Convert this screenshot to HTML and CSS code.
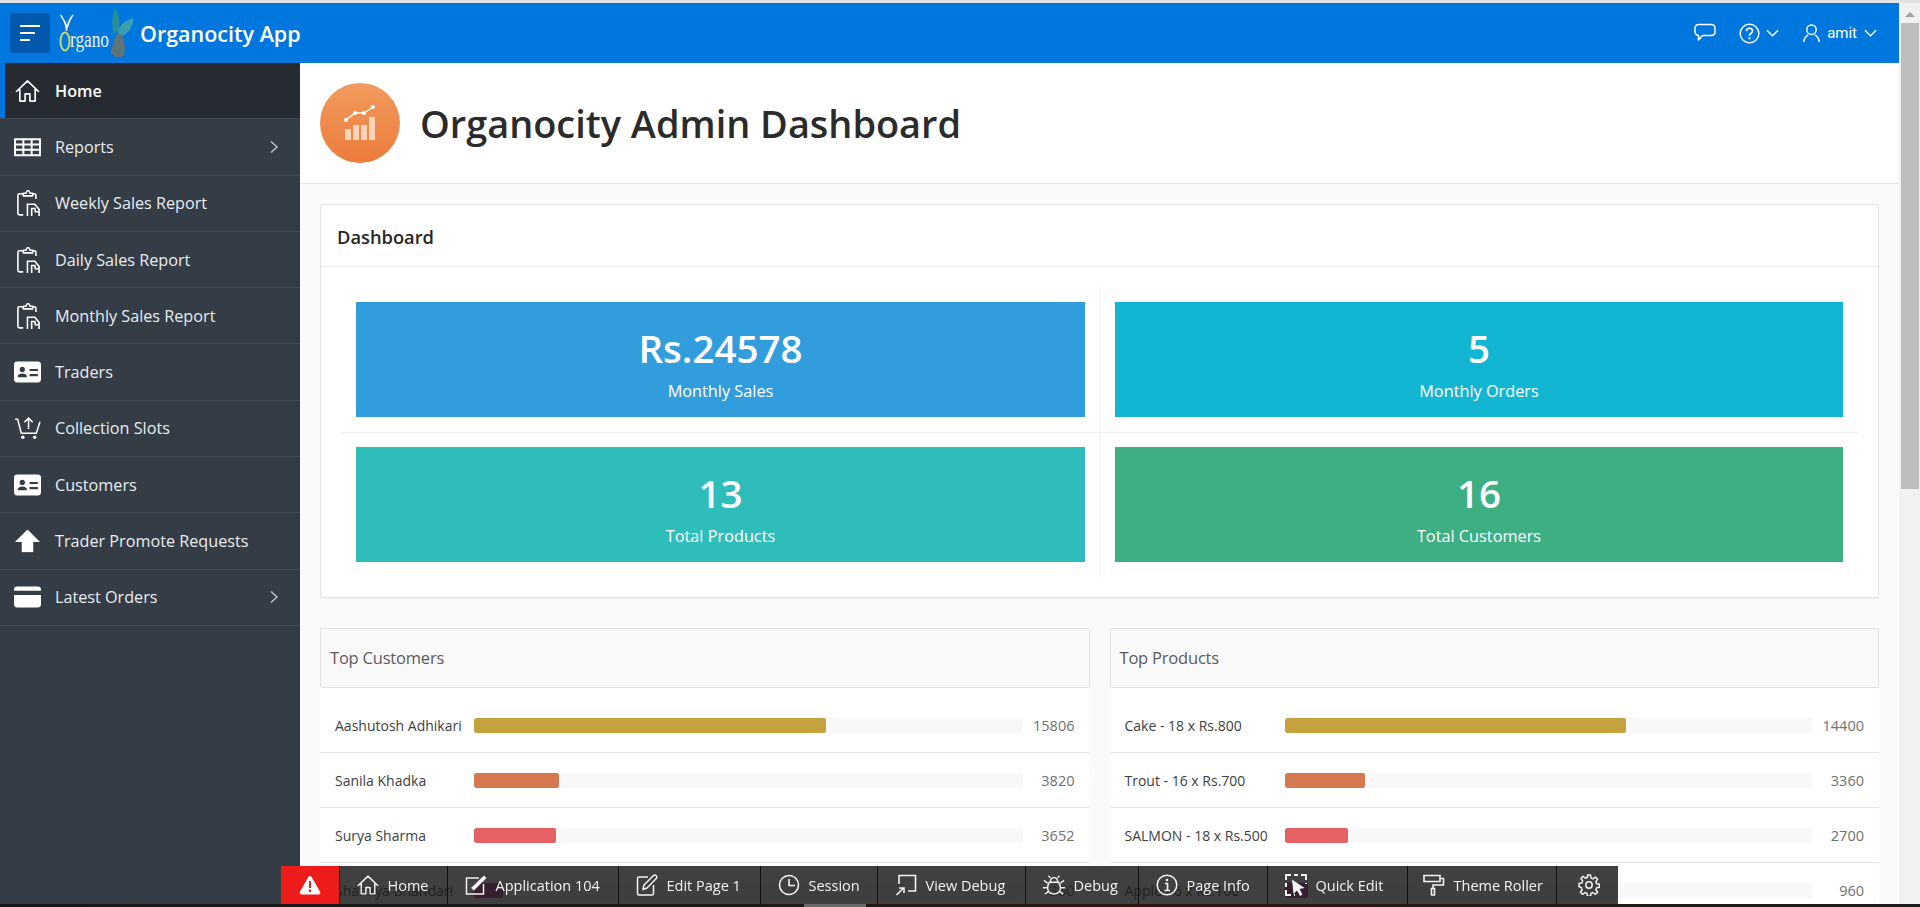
FILE: index.html
```html
<!DOCTYPE html>
<html lang="en">
<head>
  <meta charset="UTF-8">
  <title>Organocity App</title>
  <link rel="stylesheet" href="styles.css">
</head>
<body>

  <svg class="sprite" xmlns="http://www.w3.org/2000/svg">
    <symbol id="i-home" viewBox="0 0 26 24"><path d="M1.500 12.500 13 1.500l11.500 11M5 10v12.500h5.500V15h5v7.500H21V10" fill="none" stroke="currentColor" stroke-width="1.700" stroke-linejoin="round" stroke-linecap="round"/></symbol>
    <symbol id="i-table" viewBox="0 0 26 18"><path d="M1 1.500h24v15.500H1zM1 6.500h24M1 11.700h24M9 1.500V17M17 1.500V17" fill="none" stroke="currentColor" stroke-width="1.900"/></symbol>
    <symbol id="i-clip" viewBox="2 0 22 25.500"><path d="M8 4H4.500Q3 4 3 5.500v17Q3 24 4.500 24H8M17 4h1.500Q20 4 20 5.500V9M8 6V3.500h2.500Q11.500 1 12.500 1t2 2.500H17V6z" fill="none" stroke="currentColor" stroke-width="1.500" stroke-linejoin="round"/><path d="M12 25V14h7l4 5v6M16 25v-7h3l.5 3H23" fill="none" stroke="currentColor" stroke-width="1.500"/></symbol>
    <symbol id="i-id" viewBox="0 0 26 20"><rect width="26" height="20" rx="3" fill="currentColor"/><circle cx="8" cy="7.500" r="2.500" fill="#343d46"/><path d="M3.500 15q0-3.500 4.500-3.500t4.500 3.500zM15 7h8v2h-8zM15 12h8v2h-8z" fill="#343d46"/></symbol>
    <symbol id="i-cart" viewBox="0 0 26 22"><path d="M1 2.500h2.500L7 16h14.500L25 5M14 12V2M10 5.500l4-4 4 4" fill="none" stroke="currentColor" stroke-width="1.500"/><circle cx="8.500" cy="20" r="1.700" fill="currentColor"/><circle cx="20" cy="20" r="1.700" fill="currentColor"/></symbol>
    <symbol id="i-up" viewBox="0 0 24 22"><path d="M12 0 24 12h-6.500v10h-11V12H0z" fill="currentColor"/></symbol>
    <symbol id="i-card" viewBox="0 0 26 20"><rect width="26" height="20" rx="3" fill="currentColor"/><path d="M0 4h26v4H0z" fill="#343d46"/></symbol>
    <symbol id="i-chev" viewBox="0 0 10 14"><path d="m2 1.500 6 5.500-6 5.500" fill="none" stroke="currentColor" stroke-width="1.600"/></symbol>
    <symbol id="i-down" viewBox="0 0 14 8"><path d="m1 1 6 6 6-6" fill="none" stroke="currentColor" stroke-width="1.500"/></symbol>
    <symbol id="i-chat" viewBox="0 0 22 20"><path d="M5 1.500h12q4 0 4 4v3q0 4-4 4H8.500L4.500 17v-4.600Q1 12 1 8.500v-3q0-4 4-4z" fill="none" stroke="currentColor" stroke-width="1.500" stroke-linejoin="round"/></symbol>
    <symbol id="i-help" viewBox="0 0 22 22"><circle cx="11" cy="11" r="9.800" fill="none" stroke="currentColor" stroke-width="1.500"/><path d="M7.800 8.500Q8 5.500 11 5.500t3.200 2.700q0 1.600-1.600 2.500-1.600.9-1.600 2.600" fill="none" stroke="currentColor" stroke-width="1.700"/><circle cx="11" cy="16" r="1.200" fill="currentColor"/></symbol>
    <symbol id="i-user" viewBox="0 0 18 20"><circle cx="9" cy="6.500" r="5" fill="none" stroke="currentColor" stroke-width="1.500"/><path d="M1 19.500q0-5 4.500-7.500M17 19.500q0-5-4.500-7.500" fill="none" stroke="currentColor" stroke-width="1.500"/></symbol>
    <symbol id="i-warn" viewBox="0 0 22 20"><path d="M11 1q1 0 1.600 1l8.600 15q.7 2-1.400 2.500H2.200Q.1 19 .8 17L9.400 2Q10 1 11 1z" fill="currentColor"/><path d="M10 6h2v7h-2zM10 14.500h2v2.500h-2z" fill="#ee1b1b"/></symbol>
    <symbol id="i-app" viewBox="0 0 22 20"><path d="M14 3H1.500v16h17V9" fill="none" stroke="currentColor" stroke-width="1.500"/><path d="M6 13 19 .5l2.500 2.500L9 15.500z" fill="currentColor"/></symbol>
    <symbol id="i-edit" viewBox="0 0 22 22"><path d="M12 3H3Q1.500 3 1.500 4.500v15Q1.500 21 3 21h13q1.500 0 1.500-1.500V11" fill="none" stroke="currentColor" stroke-width="1.500"/><path d="M7 15.500 8 11 17.500 1.500q1.300-1 2.500 0t.5 2.700L11 14z" fill="none" stroke="currentColor" stroke-width="1.500" stroke-linejoin="round"/></symbol>
    <symbol id="i-clock" viewBox="0 0 22 22"><circle cx="11" cy="11" r="9.500" fill="none" stroke="currentColor" stroke-width="1.600"/><path d="M11 5v6.500h6" fill="none" stroke="currentColor" stroke-width="1.600"/></symbol>
    <symbol id="i-view" viewBox="0 0 22 22"><path d="M4 10V1.500h16.500V17H13" fill="none" stroke="currentColor" stroke-width="1.600"/><path d="M1.500 21l7-7M4 14h5v5" fill="none" stroke="currentColor" stroke-width="1.600"/></symbol>
    <symbol id="i-bug" viewBox="0 0 24 22"><path d="M7 8h10q2 3 2 6 0 6-7 7-7-1-7-7 0-3 2-6zM8 8q0-5 4-5t4 5" fill="none" stroke="currentColor" stroke-width="1.500"/><path d="M8 3 6 1M16 3l2-2M5 9 1 6M19 9l4-3M5 14H0M19 14h5M6 18l-4 3M18 18l4 3" fill="none" stroke="currentColor" stroke-width="1.500"/></symbol>
    <symbol id="i-info" viewBox="0 0 22 22"><circle cx="11" cy="11" r="9.800" fill="none" stroke="currentColor" stroke-width="1.500"/><path d="M9 9.500h2.500V16M8.500 16.500h5.500" fill="none" stroke="currentColor" stroke-width="1.700"/><circle cx="11" cy="6" r="1.300" fill="currentColor"/></symbol>
    <symbol id="i-quick" viewBox="0 0 22 22"><path d="M1 6V1h5M9 1h4M16 1h5v5M1 9v4M1 16v5h5M9 21h1M21 9v1" fill="none" stroke="currentColor" stroke-width="2"/><path d="M7 5.500 19.500 14l-5 1 3 5.500-2.500 1.500-3-5.500-3.500 3.500z" fill="currentColor"/></symbol>
    <symbol id="i-roller" viewBox="0 0 22 22"><path d="M1 1.500h16v6H1zM17 4.500h3.500V11H10v3.500" fill="none" stroke="currentColor" stroke-width="1.600"/><path d="M8.500 14.500h3V21h-3z" fill="none" stroke="currentColor" stroke-width="1.600"/></symbol>
    <symbol id="i-gear" viewBox="0 0 22 22"><path d="M9.500 1h3l.5 3 2 .9 2.500-1.800 2.100 2.100-1.800 2.500.9 2 2.800.5v3l-2.800.5-.9 2 1.800 2.500-2.100 2.100-2.500-1.800-2 .9-.5 2.800h-3l-.5-2.800-2-.9-2.500 1.800-2.100-2.100 1.800-2.500-.9-2L1 12.500v-3l2.800-.5.9-2-1.800-2.500 2.100-2.100 2.500 1.800 2-.9z" fill="none" stroke="currentColor" stroke-width="1.500" stroke-linejoin="round"/><circle cx="11" cy="11" r="3.200" fill="none" stroke="currentColor" stroke-width="1.500"/></symbol>
  </svg>

  <div class="top-strip"></div>

  <div class="app">
    <div class="shell">

      <header class="topbar">
        <button class="nav-toggle" aria-label="Menu">
          <span class="bar-long"></span>
          <span class="bar-mid"></span>
          <span class="bar-short"></span>
        </button>
        <svg class="logo" viewBox="0 0 76 52">
          <path d="M55 28q-4-14 1-27 6 9 4 21z" fill="#2a8f93"/>
          <path d="M59 26q1-11 16-15-2 14-13 19z" fill="#3a9fb0"/>
          <path d="M52 46l2-10 3-8 4-2 3 5 2 9-1 9-3 1h-6z" fill="#5f7479"/>
          <path d="M7.500 24Q7 15 1.500 8 6 14 8 20M7.500 24Q8 15 14 8 10 14 8.500 20" fill="#f4f4f4" stroke="#f4f4f4" stroke-width="1.300"/>
          <ellipse cx="6" cy="34.500" rx="4.500" ry="9" fill="none" stroke="#c4d86a" stroke-width="2"/>
          <text class="logo-text" x="11" y="40" textLength="39" lengthAdjust="spacingAndGlyphs">rgano</text>
        </svg>
        <a class="brand">Organocity App</a>
        <div class="topbar-actions">
          <svg class="ico-chat"><use href="#i-chat"/></svg>
          <span class="action action-help">
            <svg class="ico-help"><use href="#i-help"/></svg>
            <svg class="ico-down"><use href="#i-down"/></svg>
          </span>
          <span class="action action-user">
            <svg class="ico-user"><use href="#i-user"/></svg>
            <span class="user-name">amit</span>
            <svg class="ico-down"><use href="#i-down"/></svg>
          </span>
        </div>
      </header>

      <div class="workspace">
        <nav class="sidebar">
          <a class="nav-item is-current"><svg class="nav-ico"><use href="#i-home"/></svg><span>Home</span></a>
          <a class="nav-item"><svg class="nav-ico"><use href="#i-table"/></svg><span>Reports</span><svg class="nav-chev"><use href="#i-chev"/></svg></a>
          <a class="nav-item"><svg class="nav-ico nav-ico-clip"><use href="#i-clip"/></svg><span>Weekly Sales Report</span></a>
          <a class="nav-item"><svg class="nav-ico nav-ico-clip"><use href="#i-clip"/></svg><span>Daily Sales Report</span></a>
          <a class="nav-item"><svg class="nav-ico nav-ico-clip"><use href="#i-clip"/></svg><span>Monthly Sales Report</span></a>
          <a class="nav-item"><svg class="nav-ico"><use href="#i-id"/></svg><span>Traders</span></a>
          <a class="nav-item"><svg class="nav-ico"><use href="#i-cart"/></svg><span>Collection Slots</span></a>
          <a class="nav-item"><svg class="nav-ico"><use href="#i-id"/></svg><span>Customers</span></a>
          <a class="nav-item"><svg class="nav-ico"><use href="#i-up"/></svg><span>Trader Promote Requests</span></a>
          <a class="nav-item"><svg class="nav-ico"><use href="#i-card"/></svg><span>Latest Orders</span><svg class="nav-chev"><use href="#i-chev"/></svg></a>
        </nav>

        <main class="content">
          <div class="page-head">
            <div class="page-badge">
              <svg viewBox="0 0 34 36" class="page-badge-ico">
                <path d="M2 24h6v11H2zM10 20h6v15h-6zM18 20h6v15h-6z" fill="#fbd3b8"/>
                <path d="M26 12h6v23h-6z" fill="#fbd3b8"/>
                <path d="M3 15 12 8h9l9-6" fill="none" stroke="#fff" stroke-width="1.300"/>
                <circle cx="3" cy="15" r="2" fill="#fff"/>
                <circle cx="12" cy="8" r="2" fill="#fff"/>
                <circle cx="21" cy="8" r="2" fill="#fff"/>
                <circle cx="30" cy="2" r="2" fill="#fff"/>
              </svg>
            </div>
            <h1>Organocity Admin Dashboard</h1>
          </div>

          <div class="page-body">
            <section class="region">
              <h2 class="region-title">Dashboard</h2>
              <div class="badge-grid">
                <div class="badge-cell">
                  <div class="stat stat-blue"><strong>Rs.24578</strong><span>Monthly Sales</span></div>
                </div>
                <div class="badge-cell">
                  <div class="stat stat-cyan"><strong>5</strong><span>Monthly Orders</span></div>
                </div>
                <div class="badge-cell">
                  <div class="stat stat-teal"><strong>13</strong><span>Total Products</span></div>
                </div>
                <div class="badge-cell">
                  <div class="stat stat-green"><strong>16</strong><span>Total Customers</span></div>
                </div>
              </div>
            </section>

            <div class="chart-cols">
              <section class="chart chart-customers">
                <h3 class="chart-title">Top Customers</h3>
                <div class="chart-row">
                  <span class="row-label">Aashutosh Adhikari</span>
                  <span class="track"><i class="fill fill-gold" style="width:64.1%"></i></span>
                  <span class="row-value">15806</span>
                </div>
                <div class="chart-row">
                  <span class="row-label">Sanila Khadka</span>
                  <span class="track"><i class="fill fill-orange" style="width:15.5%"></i></span>
                  <span class="row-value">3820</span>
                </div>
                <div class="chart-row">
                  <span class="row-label">Surya Sharma</span>
                  <span class="track"><i class="fill fill-red" style="width:14.9%"></i></span>
                  <span class="row-value">3652</span>
                </div>
                <div class="chart-row">
                  <span class="row-label">Shankya Bhandari</span>
                  <span class="track"><i class="fill fill-purple" style="width:5.3%"></i></span>
                  <span class="row-value">1360</span>
                </div>
              </section>

              <section class="chart chart-products">
                <h3 class="chart-title">Top Products</h3>
                <div class="chart-row">
                  <span class="row-label">Cake - 18 x Rs.800</span>
                  <span class="track"><i class="fill fill-gold" style="width:64.7%"></i></span>
                  <span class="row-value">14400</span>
                </div>
                <div class="chart-row">
                  <span class="row-label">Trout - 16 x Rs.700</span>
                  <span class="track"><i class="fill fill-orange" style="width:15.2%"></i></span>
                  <span class="row-value">3360</span>
                </div>
                <div class="chart-row">
                  <span class="row-label">SALMON - 18 x Rs.500</span>
                  <span class="track"><i class="fill fill-red" style="width:12.1%"></i></span>
                  <span class="row-value">2700</span>
                </div>
                <div class="chart-row">
                  <span class="row-label">Apple - 6 x Rs.160</span>
                  <span class="track"><i class="fill fill-purple" style="width:4.4%"></i></span>
                  <span class="row-value">960</span>
                </div>
              </section>
            </div>
          </div>
        </main>
      </div>
    </div>

    <div class="scrollbar">
      <span class="scroll-arrow"></span>
      <span class="scroll-thumb"></span>
    </div>
  </div>

  <div class="bottom-strip"><span class="strip-light"></span></div>

  <div class="dev-toolbar">
    <a class="dev-alert"><svg class="dev-warn"><use href="#i-warn"/></svg></a>
    <a class="dev-item dev-home"><svg><use href="#i-home"/></svg>Home</a>
    <a class="dev-item dev-application"><svg><use href="#i-app"/></svg>Application 104</a>
    <a class="dev-item dev-editpage"><svg><use href="#i-edit"/></svg>Edit Page 1</a>
    <a class="dev-item dev-session"><svg><use href="#i-clock"/></svg>Session</a>
    <a class="dev-item dev-viewdebug"><svg><use href="#i-view"/></svg>View Debug</a>
    <a class="dev-item dev-debug"><svg><use href="#i-bug"/></svg>Debug</a>
    <a class="dev-item dev-pageinfo"><svg><use href="#i-info"/></svg>Page Info</a>
    <a class="dev-item dev-quick"><svg><use href="#i-quick"/></svg>Quick Edit</a>
    <a class="dev-item dev-theme"><svg><use href="#i-roller"/></svg>Theme Roller</a>
    <a class="dev-item dev-gear"><svg><use href="#i-gear"/></svg></a>
  </div>

</body>
</html>
```

FILE: styles.css
```css
html, body {
  height: 100%;
}

body {
  margin: 0;
  height: 907px;
  overflow: hidden;
  display: flex;
  flex-direction: column;
  font-family: "Open Sans", "Noto Sans", sans-serif;
  color: #262626;
  background: #fafafa;
}

.sprite {
  position: absolute;
  width: 0;
  height: 0;
}

.top-strip {
  height: 3px;
  background: #e2e2e2;
}

.bottom-strip {
  height: 3px;
  background: linear-gradient(90deg, #14181b, #1f1a18 40%, #2b1710 60%, #1d1c1c);
  display: flex;
  padding-left: 804px;
}

.strip-light {
  width: 62px;
  background: #6b6b6b;
}

.app {
  flex: 1;
  min-height: 0;
  display: flex;
}

.shell {
  flex: 1;
  min-width: 0;
  display: flex;
  flex-direction: column;
}

/* top bar */
.topbar {
  height: 60px;
  flex: none;
  display: flex;
  align-items: center;
  background: #0076df;
  color: #fff;
  padding-left: 10px;
}

.nav-toggle {
  width: 40px;
  height: 40px;
  border: 0;
  padding: 0 10px;
  border-radius: 3px;
  background: #0059ad;
  display: flex;
  flex-direction: column;
  justify-content: center;
  gap: 4.5px;
}

.nav-toggle span {
  display: block;
  height: 2.500px;
  background: #fff;
}

.bar-long { width: 20px; }
.bar-mid { width: 15px; }
.bar-short { width: 10px; }

.logo {
  width: 76px;
  height: 52px;
  margin-left: 9px;
  flex: none;
}

.logo-text {
  font-family: "Liberation Serif", serif;
  font-size: 24px;
  fill: #eef2ee;
}

.brand {
  margin-left: 5px;
  font-size: 21.500px;
  font-weight: 600;
}

.topbar-actions {
  margin-left: auto;
  display: flex;
  align-items: center;
  padding-right: 22px;
}

.action {
  display: flex;
  align-items: center;
}

.ico-chat {
  width: 22px;
  height: 20px;
  color: #fff;
}

.action-help {
  margin-left: 23px;
  gap: 6px;
}

.ico-help {
  width: 21px;
  height: 21px;
}

.ico-down {
  width: 13px;
  height: 8px;
}

.action-user {
  margin-left: 24px;
}

.ico-user {
  width: 17px;
  height: 20px;
}

.user-name {
  font-family: Roboto, sans-serif;
  font-size: 15px;
  margin: 0 7px 0 7px;
}

/* side nav */
.workspace {
  flex: 1;
  min-height: 0;
  display: flex;
}

.sidebar {
  width: 300px;
  flex: none;
  background: #343d46;
}

.nav-item {
  height: 55.300px;
  display: flex;
  align-items: center;
  padding-left: 55px;
  padding-right: 21px;
  position: relative;
  font-size: 16.200px;
  color: #e9ecef;
  border-bottom: 1px solid #3f4a54;
}

.nav-item.is-current {
  background: #262b31;
  color: #fff;
  font-weight: 600;
  box-shadow: inset 5px 0 0 #0076df;
}

.nav-ico {
  position: absolute;
  left: 14px;
  top: 50%;
  width: 27px;
  height: 23px;
  transform: translateY(-50%);
  color: #fff;
}

.nav-ico-clip {
  left: 16px;
  width: 25px;
  height: 27px;
}

.nav-chev {
  width: 10px;
  height: 14px;
  margin-left: auto;
  color: #b5bcc2;
}

/* content */
.content {
  flex: 1;
  min-width: 0;
  overflow: hidden;
  position: relative;
}

.page-head {
  height: 120px;
  background: #fff;
  border-bottom: 1px solid #e4e4e4;
  display: flex;
  align-items: center;
  padding-left: 20px;
}

.page-badge {
  width: 80px;
  height: 80px;
  border-radius: 50%;
  background: linear-gradient(#f19a5e, #ec7c3b);
  display: flex;
  align-items: center;
  justify-content: center;
  flex: none;
}

.page-badge-ico {
  width: 34px;
  height: 36px;
}

h1 {
  margin: 0 0 0 20px;
  font-size: 37.900px;
  font-weight: 600;
  color: #2b2b2b;
}

.page-body {
  padding: 20px;
}

.region {
  background: #fff;
  border: 1px solid #e4e4e4;
  border-radius: 2px;
  box-shadow: 0 1px 1px rgba(0, 0, 0, 0.05);
}

.region-title {
  margin: 0;
  height: 61px;
  line-height: 63px;
  padding-left: 16px;
  font-size: 18.300px;
  font-weight: 600;
  color: #262626;
  border-bottom: 1px solid #e9e9e9;
}

.badge-grid {
  display: grid;
  grid-template-columns: 760px 1fr;
  margin: 20px;
}

.badge-cell {
  padding: 15px;
}

.badge-cell:nth-child(odd) {
  border-right: 1px solid #f0f0f0;
}

.badge-cell:nth-child(even) {
  padding-left: 14px;
}

.badge-cell:nth-child(-n+2) {
  border-bottom: 1px solid #f0f0f0;
}

.badge-cell:nth-child(n+3) {
  padding-top: 14px;
}

.stat {
  height: 115px;
  box-sizing: border-box;
  padding-top: 8px;
  color: #fff;
  display: flex;
  flex-direction: column;
  align-items: center;
  justify-content: center;
}

.stat strong {
  font-size: 38.500px;
  font-weight: 600;
  line-height: 50px;
  margin-top: -1px;
}

.stat span {
  font-size: 16.300px;
  line-height: 24px;
  margin-top: 6px;
}

.stat-blue { background: #329ddd; }
.stat-cyan { background: #13b6d2; }
.stat-teal { background: #2ebdbb; }
.stat-green { background: #3eae83; }

/* bar charts */
.chart-cols {
  display: grid;
  grid-template-columns: 1fr 1fr;
  gap: 20px;
  margin-top: 30px;
}

.chart {
  background: #fff;
  --label: 139px;
}

.chart-products {
  --label: 160px;
}

.chart-title {
  margin: 0 0 10px;
  height: 58px;
  line-height: 58px;
  padding-left: 9px;
  font-size: 16.500px;
  font-weight: 400;
  letter-spacing: -0.2px;
  color: #5b5b5b;
  background: #f9f9f9;
  border: 1px solid #e2e2e2;
  border-radius: 2px;
}

.chart-row {
  height: 54px;
  display: grid;
  grid-template-columns: var(--label) 1fr 52px;
  align-items: center;
  padding: 0 15px;
  border-bottom: 1px solid #e6e6e6;
}

.row-label {
  font-size: 14px;
  color: #404040;
  white-space: nowrap;
}

.row-value {
  font-size: 14.500px;
  color: #707070;
  text-align: right;
}

.track {
  height: 15px;
  background: #f8f8f8;
  border-radius: 2px;
  overflow: hidden;
  display: block;
}

.fill {
  display: block;
  height: 100%;
  border-radius: 2px;
}

.fill-gold { background: #c4a23c; }
.fill-orange { background: #d5774f; }
.fill-red { background: #e46264; }
.fill-purple { background: #c2368f; }

/* scrollbar */
.scrollbar {
  width: 21px;
  flex: none;
  background: #f1f1f1;
  display: flex;
  flex-direction: column;
  align-items: center;
}

.scroll-arrow {
  margin-top: 9px;
  border: 5px solid transparent;
  border-top: 0;
  border-bottom: 5px solid #a3a3a3;
}

.scroll-thumb {
  margin-top: 6px;
  width: 18px;
  height: 466px;
  background: #bdbdbd;
}

/* developer toolbar */
.dev-toolbar {
  position: fixed;
  left: 281px;
  bottom: 3px;
  height: 38px;
  display: flex;
  background: rgba(28, 28, 28, 0.84);
  color: #f2f2f2;
  font-size: 14.500px;
}

.dev-alert {
  width: 59px;
  background: #ee1b1b;
  display: flex;
  align-items: center;
  justify-content: center;
  border-right: 1px solid #111;
  box-sizing: border-box;
}

.dev-warn {
  width: 22px;
  height: 20px;
  color: #fff;
}

.dev-item {
  display: flex;
  align-items: center;
  gap: 8.5px;
  padding-left: 17px;
  box-sizing: border-box;
  border-right: 1px solid #111;
  white-space: nowrap;
}

.dev-item svg {
  width: 22px;
  height: 22px;
  flex: none;
}

.dev-home { width: 108px; }
.dev-application { width: 171px; }
.dev-editpage { width: 142px; }
.dev-session { width: 117px; }
.dev-viewdebug { width: 148px; }
.dev-debug { width: 113px; }
.dev-pageinfo { width: 129px; }
.dev-quick { width: 140px; }
.dev-theme { width: 149px; padding-left: 15px; }
.dev-gear { width: 61px; padding-left: 21px; border-right: 0; }
```
